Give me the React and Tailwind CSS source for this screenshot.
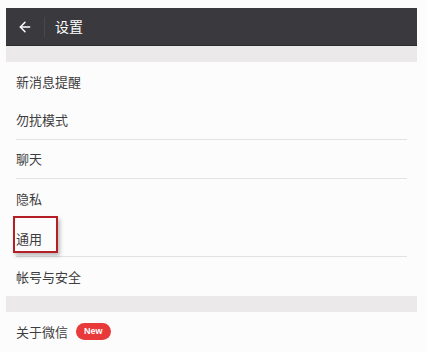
import { ArrowLeft } from 'lucide-react';

const font = { fontFamily: '"Noto Sans CJK SC", "Noto Sans", sans-serif' };

function Row({ label, divider, children }) {
  return (
    <div className="px-[10px]">
      <div
        className={`h-[39px] flex items-center gap-2 ${divider ? 'border-b border-[#e3e1e3]' : ''}`}
      >
        {children || <span className="text-[13px] text-[#3e3e40]">{label}</span>}
      </div>
    </div>
  );
}

export default function App() {
  return (
    <div className="w-[426px] h-[352px] bg-[#fdfcfd] pt-[8px] overflow-hidden" style={font}>
      <div className="ml-[6px] w-[411px]">
        <div className="h-[38px] bg-[#3a393d] flex items-center border-b border-[#2c2b2e]">
          <ArrowLeft className="w-[16px] h-[16px] text-white ml-[11px]" strokeWidth={2.2} />
          <div className="w-px h-[20px] bg-[#48474b] ml-[11px]" />
          <span className="ml-[10px] text-[14px] text-white">设置</span>
        </div>
        <div className="h-[16px] bg-[#ebe9ea]" />
        <Row label="新消息提醒" />
        <Row label="勿扰模式" divider />
        <Row label="聊天" divider />
        <Row label="隐私" />
        <Row divider>
          <div className="relative">
            <span className="text-[13px] text-[#3e3e40]">通用</span>
            <div className="absolute -left-[3px] -top-[9px] w-[45px] h-[37px] border-2 border-[#b41f25] shadow-[2px_3px_4px_rgba(0,0,0,0.25)]" />
          </div>
        </Row>
        <Row label="帐号与安全" />
        <div className="h-[16px] bg-[#ebe9ea]" />
        <Row>
          <span className="text-[13px] text-[#3e3e40]">关于微信</span>
          <span className="h-[17px] px-[8px] rounded-full bg-[#e8393b] text-white text-[9px] font-bold flex items-center" style={{ fontFamily: '"Liberation Sans", sans-serif' }}>
            New
          </span>
        </Row>
      </div>
    </div>
  );
}
